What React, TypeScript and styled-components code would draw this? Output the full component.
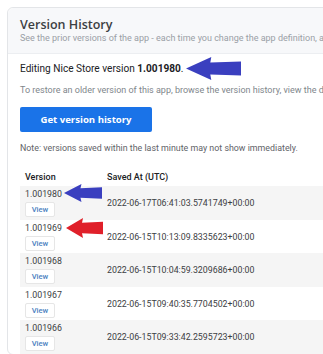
import styled, { createGlobalStyle } from 'styled-components'

const GlobalStyle = createGlobalStyle`
  html, body {
    margin: 0;
    padding: 0;
    background: #ffffff;
    overflow: hidden;
  }
  body {
    font-family: Roboto, "Liberation Sans", Arial, sans-serif;
    color: #202124;
  }
`

const Page = styled.div`
  position: relative;
  padding: 7px 0 0 7px;
  width: 323px;
  height: 354px;
  box-sizing: border-box;
  overflow: hidden;
`

const Card = styled.section`
  width: 420px;
  border: 1px solid #e3e5e8;
  border-radius: 6px;
  background: #fff;
`

const Header = styled.header`
  background: #f7f8fa;
  border-bottom: 1px solid #eceef1;
  border-radius: 6px 6px 0 0;
  padding: 9px 12px 9px;
`

const Title = styled.h2`
  margin: 0;
  font-family: "Open Sans", Roboto, sans-serif;
  font-size: 12.5px;
  font-weight: 600;
  color: #3c4043;
  line-height: 15px;
`

const Subtitle = styled.p`
  margin: 0;
  font-size: 9px;
  color: #9aa0a6;
  line-height: 12px;
  white-space: nowrap;
`

const Body = styled.div`
  padding: 7px 12px 0;
`

const Editing = styled.p`
  margin: 0;
  font-size: 10.1px;
  line-height: 16px;
  color: #202124;
  white-space: nowrap;
  b {
    font-weight: 700;
  }
`

const Hint = styled.p`
  margin: 7px 0 0;
  font-size: 9px;
  line-height: 12px;
  color: #80868b;
  white-space: nowrap;
`

const PrimaryButton = styled.button`
  display: block;
  margin-top: 11px;
  width: 132px;
  height: 25px;
  border: none;
  border-radius: 2px;
  background: #1a73e8;
  color: #fff;
  font-family: "Open Sans", Roboto, sans-serif;
  font-size: 9.6px;
  font-weight: 700;
  cursor: pointer;
`

const Note = styled.p`
  margin: 10px 0 0;
  font-size: 8.85px;
  line-height: 12px;
  color: #5f6368;
  white-space: nowrap;
`

const Table = styled.div`
  margin-top: 14px;
`

const HeadRow = styled.div`
  display: grid;
  grid-template-columns: 82px 1fr;
  padding: 0 5px;
  height: 18px;
  align-items: center;
  font-size: 9px;
  font-weight: 500;
  color: #202124;
`

const Row = styled.div<{ $shade: boolean }>`
  display: grid;
  grid-template-columns: 82px 1fr;
  align-items: center;
  padding: 3px 5px 3px;
  height: 33.6px;
  box-sizing: border-box;
  background: ${({ $shade }) => ($shade ? '#f5f5f5' : '#ffffff')};
  font-size: 8.8px;
  color: #3c4043;
`

const VersionCell = styled.div`
  display: flex;
  flex-direction: column;
  align-items: flex-start;
  gap: 2px;
  line-height: 11px;
`

const ViewButton = styled.button`
  width: 30px;
  height: 15px;
  padding: 0;
  border: 1px solid #e6e6e6;
  border-radius: 2px;
  background: #fff;
  color: #4a7fc1;
  font-family: Roboto, sans-serif;
  font-size: 7.6px;
  font-weight: 500;
`

const Stamp = styled.div`
  white-space: nowrap;
`

const Arrow = styled.svg<{ $x: number; $y: number }>`
  position: absolute;
  left: ${({ $x }) => $x}px;
  top: ${({ $y }) => $y}px;
`

const rows = [
  ['1.001980', '2022-06-17T06:41:03.5741749+00:00'],
  ['1.001969', '2022-06-15T10:13:09.8335623+00:00'],
  ['1.001968', '2022-06-15T10:04:59.3209686+00:00'],
  ['1.001967', '2022-06-15T09:40:35.7704502+00:00'],
  ['1.001966', '2022-06-15T09:33:42.2595723+00:00'],
]

function LeftArrow({ x, y, w, h, color }: { x: number; y: number; w: number; h: number; color: string }) {
  const head = w * 0.46
  const shaft = h * 0.24
  return (
    <Arrow $x={x} $y={y} width={w} height={h} viewBox={`0 0 ${w} ${h}`}>
      <path
        d={`M0 ${h / 2} L${head} 0 L${head - 1} ${shaft} L${w} ${shaft - 1} L${w} ${h - shaft + 1} L${head - 1} ${h - shaft} L${head} ${h} Z`}
        fill={color}
      />
    </Arrow>
  )
}

export default function App() {
  return (
    <Page>
      <GlobalStyle />
      <Card>
        <Header>
          <Title>Version History</Title>
          <Subtitle>
            See the prior versions of the app - each time you change the app definition, a new version is saved.
          </Subtitle>
        </Header>
        <Body>
          <Editing>
            Editing Nice Store version <b>1.001980</b>.
          </Editing>
          <Hint>
            To restore an older version of this app, browse the version history, view the desired version and restore it.
          </Hint>
          <PrimaryButton>Get version history</PrimaryButton>
          <Note>Note: versions saved within the last minute may not show immediately.</Note>
          <Table>
            <HeadRow>
              <span>Version</span>
              <span>Saved At (UTC)</span>
            </HeadRow>
            {rows.map(([version, saved], i) => (
              <Row key={version} $shade={i % 2 === 0}>
                <VersionCell>
                  <span>{version}</span>
                  <ViewButton>View</ViewButton>
                </VersionCell>
                <Stamp>{saved}</Stamp>
              </Row>
            ))}
          </Table>
        </Body>
      </Card>
      <LeftArrow x={186} y={57} w={55} h={23} color="#3a3fbf" />
      <LeftArrow x={64} y={184} w={38} h={18} color="#3a3fbf" />
      <LeftArrow x={66} y={218} w={37} h={20} color="#e0202a" />
    </Page>
  )
}
